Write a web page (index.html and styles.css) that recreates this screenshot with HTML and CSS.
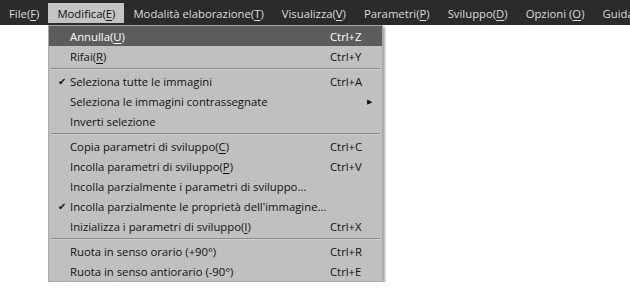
FILE: index.html
```html
<!DOCTYPE html>
<html lang="it">
<head>
    <meta charset="UTF-8">
    <title>Modifica</title>
    <link rel="stylesheet" href="styles.css">
</head>
<body>

    <div class="menubar">
        <span class="top-item">File(<u>F</u>)</span>
        <span class="top-item open">Modifica(<u>E</u>)</span>
        <span class="top-item">Modalità elaborazione(<u>T</u>)</span>
        <span class="top-item">Visualizza(<u>V</u>)</span>
        <span class="top-item">Parametri(<u>P</u>)</span>
        <span class="top-item">Sviluppo(<u>D</u>)</span>
        <span class="top-item">Opzioni (<u>O</u>)</span>
        <span class="top-item">Guida</span>
    </div>

    <div class="dropdown">
        <div class="row active"><span class="check"></span><span class="label">Annulla(<u>U</u>)</span><span class="keys">Ctrl+Z</span></div>
        <div class="row"><span class="check"></span><span class="label">Rifai(<u>R</u>)</span><span class="keys">Ctrl+Y</span></div>
        <div class="sep"></div>
        <div class="row"><span class="check">✔</span><span class="label">Seleziona tutte le immagini</span><span class="keys">Ctrl+A</span></div>
        <div class="row"><span class="check"></span><span class="label">Seleziona le immagini contrassegnate</span><span class="keys arrow">▶</span></div>
        <div class="row"><span class="check"></span><span class="label">Inverti selezione</span><span class="keys"></span></div>
        <div class="sep"></div>
        <div class="row"><span class="check"></span><span class="label">Copia parametri di sviluppo(<u>C</u>)</span><span class="keys">Ctrl+C</span></div>
        <div class="row"><span class="check"></span><span class="label">Incolla parametri di sviluppo(<u>P</u>)</span><span class="keys">Ctrl+V</span></div>
        <div class="row"><span class="check"></span><span class="label">Incolla parzialmente i parametri di sviluppo...</span><span class="keys"></span></div>
        <div class="row"><span class="check">✔</span><span class="label">Incolla parzialmente le proprietà dell'immagine...</span><span class="keys"></span></div>
        <div class="row"><span class="check"></span><span class="label">Inizializza i parametri di sviluppo(<u>I</u>)</span><span class="keys">Ctrl+X</span></div>
        <div class="sep"></div>
        <div class="row"><span class="check"></span><span class="label">Ruota in senso orario (+90°)</span><span class="keys">Ctrl+R</span></div>
        <div class="row"><span class="check"></span><span class="label">Ruota in senso antiorario (-90°)</span><span class="keys">Ctrl+E</span></div>
    </div>

</body>
</html>
```

FILE: styles.css
```css
body {
    margin: 0;
    background: #ffffff;
    font-family: "Open Sans", "Noto Sans", sans-serif;
    font-size: 11.3px;
    overflow: hidden;
}

u {
    text-underline-offset: 2px;
}

.menubar {
    display: flex;
    height: 25px;
    background: #2b2b2b;
    color: #dcdcdc;
    white-space: nowrap;
}

.top-item {
    display: flex;
    align-items: center;
    margin: 3px 0 2px;
    padding: 0 9px;
}

.top-item.open {
    background: #c4c4c4;
    color: #111111;
}

.dropdown {
    width: 333px;
    margin: 0 0 0 48px;
    background: #c0c0c0;
    border: 1px solid #a8a8a8;
    box-shadow: 2px 2px 2px rgba(0, 0, 0, 0.35);
    color: #111111;
}

.row {
    display: flex;
    align-items: center;
    height: 20px;
    white-space: nowrap;
}

.row.active {
    background: #5c5c5c;
    color: #ffffff;
}

.check {
    width: 12px;
    margin-left: 9px;
    font-size: 10px;
}

.label {
    flex: 1;
}

.keys {
    width: 52px;
}

.arrow {
    width: 15px;
    padding-left: 37px;
    font-size: 7px;
}

.sep {
    height: 1px;
    margin: 2px 2px 1px;
    background: #8a8a8a;
    border-bottom: 1px solid #d0d0d0;
}
```
